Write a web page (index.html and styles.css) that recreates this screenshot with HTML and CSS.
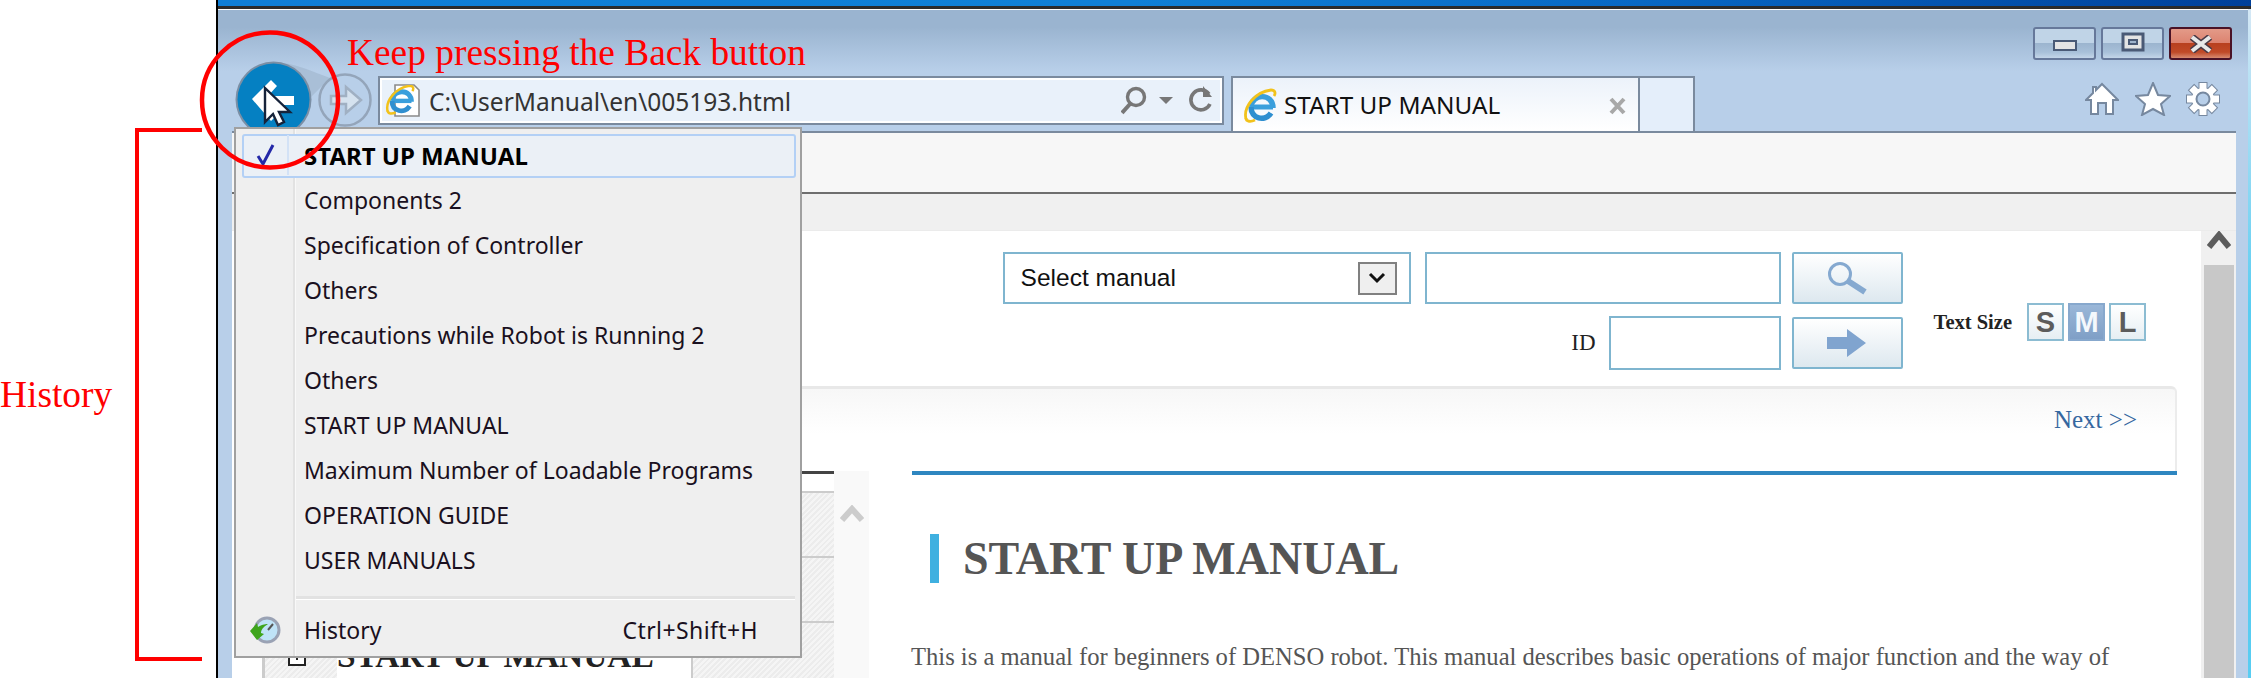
FILE: index.html
```html
<!DOCTYPE html>
<html lang="en">
<head>
    <meta charset="UTF-8">
    <meta name="viewport" content="width=device-width, initial-scale=1.0">
    <title>Keep pressing the Back button</title>
    <link rel="stylesheet" href="styles.css">
</head>
<body>
    <svg class="defs" width="0" height="0">
        <symbol id="ie" viewBox="0 0 34 34">
            <path d="M8 18H30" fill="none" stroke="#3a9fdc" stroke-width="5"/>
            <path d="M8 18c1-14 22-14 22 1" fill="none" stroke="#3a9fdc" stroke-width="5.500"/>
            <path d="M8 18c0 12 14 15 20 6" fill="none" stroke="#2f8fd0" stroke-width="5.500"/>
            <path d="M3 30C0 18 12 3 28 1c4 0 5 3 3 6" fill="none" stroke="#f2c21b" stroke-width="2.800"/>
            <path d="M3 29c0 4 5 4 9 2" fill="none" stroke="#f2c21b" stroke-width="2.800"/>
        </symbol>
        <g id="gear-shape">
            <rect x="-3.500" y="-16" width="7" height="32"/>
            <rect x="-3.500" y="-16" width="7" height="32" transform="rotate(45)"/>
            <rect x="-3.500" y="-16" width="7" height="32" transform="rotate(90)"/>
            <rect x="-3.500" y="-16" width="7" height="32" transform="rotate(135)"/>
            <circle r="11"/>
        </g>
    </svg>

    <div class="window">
        <div class="desktop"></div>
        <div class="frame">
            <div class="caption">
                <div class="win-btn">
                    <svg width="24" height="12"><rect x="1" y="1" width="22" height="9" fill="#e4e4e4" stroke="#4a5a76" stroke-width="2"/></svg>
                </div>
                <div class="win-btn win-btn-max">
                    <svg width="24" height="20"><rect x="2" y="2" width="20" height="16" fill="#e4e4e4" stroke="#4a5a76" stroke-width="3"/><rect x="8" y="8" width="8" height="4" fill="#9fb4cc" stroke="#4a5a76" stroke-width="2"/></svg>
                </div>
                <div class="win-btn win-btn-close">
                    <svg width="24" height="18"><path d="M3 2l18 14M21 2L3 16" stroke="#4a3a46" stroke-width="7"/><path d="M3 2l18 14M21 2L3 16" stroke="#e8e8e8" stroke-width="4"/></svg>
                </div>
            </div>

            <div class="toolbar">
                <svg class="nav-buttons" width="160" height="80" viewBox="0 0 160 80">
                    <path d="M55 2C75 2 95 12 112 18L90 40Z" fill="#9fb4cc" opacity="0.6"/>
                    <circle cx="55.500" cy="39.500" r="38" fill="#7b8fa5"/>
                    <circle cx="55.500" cy="39.500" r="36" fill="#0580c2"/>
                    <path d="M34 39l19-19 6 6-9 10h26v9H50l9 10-6 6z" fill="#fff"/>
                    <path d="M47 28V62l8-8 5 11 6-3-5-10h11z" fill="#fff" stroke="#16233a" stroke-width="2.400"/>
                    <circle cx="127" cy="40" r="25.500" fill="none" stroke="#94a5ba" stroke-width="2.500"/>
                    <path d="M113 36h15v-9l15 13-15 13v-9h-15z" fill="#d5e2ef" stroke="#a0b0c3" stroke-width="2.500"/>
                </svg>

                <div class="address">
                    <svg class="addr-icon" width="36" height="36" viewBox="0 0 36 36">
                        <path d="M10 2h19l5 5v26H10z" fill="#fff" stroke="#8a8a8a" stroke-width="1.600"/>
                        <use href="#ie" x="0" y="2" width="30" height="30"/>
                    </svg>
                    <span class="addr-text">C:\UserManual\en\005193.html</span>
                    <svg class="addr-tools" width="92" height="30" viewBox="0 0 92 30">
                        <circle cx="15" cy="11" r="8.500" fill="none" stroke="#777" stroke-width="3.400"/>
                        <path d="M9 18L1 27" stroke="#777" stroke-width="4"/>
                        <path d="M38 11h14l-7 7z" fill="#777"/>
                        <path d="M88 8a10 10 0 1 0 1 10" fill="none" stroke="#777" stroke-width="3.600"/>
                        <path d="M82 0v11h9z" fill="#777"/>
                    </svg>
                </div>

                <div class="tab">
                    <svg class="tab-icon" width="34" height="36"><use href="#ie" width="34" height="36"/></svg>
                    <span class="tab-title">START UP MANUAL</span>
                    <svg class="tab-close" width="17" height="18"><path d="M2 2l13 14M15 2L2 16" stroke="#a8a8a8" stroke-width="4"/></svg>
                </div>
                <div class="tab-new"></div>

                <div class="tools">
                    <svg width="34" height="34" viewBox="0 0 34 34"><path d="M17 2L33 18H28V32H21V21H13V32H6V18H1L8 11V5H11V8Z" fill="#fff" stroke="#76889f" stroke-width="2"/></svg>
                    <svg width="36" height="34" viewBox="0 0 36 34"><path d="M18 1l5 12 12 1-9 8 3 11-11-6-11 6 3-11-9-8 12-1z" fill="#fff" stroke="#76889f" stroke-width="2"/></svg>
                    <svg class="tools-gear" width="34" height="34" viewBox="-17 -17 34 34">
                        <use href="#gear-shape" fill="#76889f" stroke="#76889f" stroke-width="2"/>
                        <use href="#gear-shape" fill="#fff"/>
                        <circle r="6.500" fill="#b8cfe9" stroke="#76889f" stroke-width="2"/>
                    </svg>
                </div>
            </div>

            <div class="browser">
                <div class="favbar"></div>
                <div class="statusband"></div>
                <div class="viewport">
                    <div class="page">
                        <div class="page-head">
                            <div class="search">
                                <div class="search-row">
                                    <div class="select">
                                        <span>Select manual</span>
                                        <span class="select-btn">
                                            <svg width="20" height="14"><path d="M3 3l7 7 7-7" fill="none" stroke="#111" stroke-width="3"/></svg>
                                        </span>
                                    </div>
                                    <div class="input input-wide"></div>
                                    <div class="go-btn">
                                        <svg width="42" height="34" viewBox="0 0 42 34"><circle cx="14" cy="13" r="10.500" fill="none" stroke="#85a9d0" stroke-width="3"/><path d="M22 20l17 11" stroke="#85a9d0" stroke-width="6"/></svg>
                                    </div>
                                </div>
                                <div class="search-row search-row-id">
                                    <label class="id-label">ID</label>
                                    <div class="input input-id"></div>
                                    <div class="go-btn">
                                        <svg width="40" height="28" viewBox="0 0 40 28"><path d="M0 8h20V0l19 14-19 14v-8H0z" fill="#80a4cf"/></svg>
                                    </div>
                                </div>
                            </div>
                            <div class="text-size">
                                <span class="text-size-label">Text Size</span>
                                <span class="size-btn">S</span>
                                <span class="size-btn size-btn-on">M</span>
                                <span class="size-btn">L</span>
                            </div>
                        </div>

                        <div class="pager"><a class="next">Next &gt;&gt;</a></div>

                        <div class="columns">
                            <div class="sidebar">
                                <div class="tree">
                                    <div class="tree-row"></div>
                                    <div class="tree-row"></div>
                                    <div class="tree-row tree-row-open">
                                        <span class="tree-toggle"></span>
                                        <span class="tree-label">START UP MANUAL</span>
                                    </div>
                                </div>
                                <div class="tree-scroll">
                                    <svg width="24" height="18"><path d="M2 15L12 4l10 11" fill="none" stroke="#ccc" stroke-width="6"/></svg>
                                </div>
                            </div>
                            <div class="article">
                                <h1>START UP MANUAL</h1>
                                <p>This is a manual for beginners of DENSO robot. This manual describes basic operations of major function and the way of</p>
                            </div>
                        </div>
                    </div>
                    <div class="scrollbar">
                        <svg width="24" height="18"><path d="M2 16L12 4l10 12" fill="none" stroke="#5c5c5c" stroke-width="6"/></svg>
                        <div class="scroll-thumb"></div>
                    </div>
                </div>
            </div>
        </div>
    </div>

    <!-- History menu, open over the page -->
    <div class="menu">
        <div class="menu-item menu-item-current">
            <span class="menu-check">
                <svg width="20" height="24" viewBox="0 0 20 24"><path d="M2 13l5 8L17 2" fill="none" stroke="#2328a8" stroke-width="3"/></svg>
            </span>
            <span>START UP MANUAL</span>
        </div>
        <div class="menu-item">Components 2</div>
        <div class="menu-item">Specification of Controller</div>
        <div class="menu-item">Others</div>
        <div class="menu-item">Precautions while Robot is Running 2</div>
        <div class="menu-item">Others</div>
        <div class="menu-item">START UP MANUAL</div>
        <div class="menu-item">Maximum Number of Loadable Programs</div>
        <div class="menu-item">OPERATION GUIDE</div>
        <div class="menu-item">USER MANUALS</div>
        <div class="menu-sep"></div>
        <div class="menu-item menu-item-history">
            <svg class="history-icon" width="32" height="32" viewBox="0 0 32 32">
                <circle cx="18" cy="15" r="12" fill="#bfe3f7" stroke="#9aa2b4" stroke-width="3"/>
                <path d="M19 15l5-6" stroke="#555" stroke-width="2"/>
                <path d="M1 16l7-8 1 4c5-3 8-3 10-3-5 3-7 6-7 9l3 1-7 6z" fill="#3fa51c"/>
            </svg>
            <span>History</span>
            <span class="shortcut">Ctrl+Shift+H</span>
        </div>
    </div>

    <!-- Red notes drawn on the screenshot -->
    <svg class="note-circle" width="146" height="146" viewBox="0 0 146 146">
        <ellipse cx="73" cy="73" rx="68" ry="67.500" fill="none" stroke="#f00" stroke-width="4.500"/>
    </svg>
    <div class="note-back">Keep pressing the Back button</div>
    <div class="note-bracket"></div>
    <div class="note-history">History</div>
</body>
</html>
```

FILE: styles.css
```css
* {
    box-sizing: border-box;
}

body {
    margin: 0;
    width: 2251px;
    height: 678px;
    overflow: hidden;
    position: relative;
    background-color: #fff;
    font-family: "Liberation Serif", serif;
}

.defs {
    position: absolute;
}

.window {
    margin-left: 216px;
    height: 678px;
    border-left: 2px solid #000;
    display: flex;
    flex-direction: column;
    overflow: hidden;
}

.desktop {
    height: 6px;
    flex: none;
    background: linear-gradient(90deg, #0f7ed6, #1080d6 45%, #0868c4 70%, #00409a);
}

.frame {
    flex: 1;
    min-height: 0;
    border-top: 3px solid #2b2b2b;
    display: flex;
    flex-direction: column;
    background:
        linear-gradient(#d5e8f5, #58cdf2 45%) right / 3px 100% no-repeat,
        linear-gradient(#fff 1px, #9ab4d0 1px, #9ab4d0 18px, #b8cfe9 62px);
}

/* title bar */
.caption {
    height: 67px;
    flex: none;
    padding: 18px 19px 0 0;
    display: flex;
    justify-content: flex-end;
    align-items: flex-start;
    gap: 5px;
}

.win-btn {
    width: 63px;
    height: 33px;
    border: 2px solid #66789a;
    border-radius: 3px;
    display: flex;
    align-items: flex-end;
    justify-content: center;
    padding-bottom: 6px;
    background: linear-gradient(#c0d4e7 50%, #9cb5cf 50%, #a8c0d9 80%, #c3d5e8);
}

.win-btn-max {
    padding-bottom: 6px;
}

.win-btn-close {
    border-color: #4a1226;
    padding-bottom: 5px;
    background: linear-gradient(#e39a88, #dc8370 48%, #b8401f 50%, #c04a28 80%, #d88a70);
}

/* nav buttons, address, tabs */
.toolbar {
    height: 55px;
    flex: none;
    display: flex;
    align-items: flex-start;
}

.nav-buttons {
    flex: none;
    margin-top: -16px;
}

.address {
    width: 846px;
    height: 49px;
    flex: none;
    border: 2px solid #7a8a9e;
    box-shadow: inset 0 0 0 2px #fff;
    background-color: #e9f1fa;
    display: flex;
    align-items: center;
    padding: 1px 9px 0 5px;
    font-family: "Noto Sans", sans-serif;
    font-size: 24.500px;
    color: #333;
}

.addr-icon {
    flex: none;
}

.addr-text {
    margin-left: 8px;
    flex: 1;
}

.tab {
    width: 409px;
    height: 55px;
    flex: none;
    margin-left: 7px;
    border: 2px solid #7a8a9e;
    border-bottom: none;
    background: linear-gradient(#ecf2fa, #fff);
    display: flex;
    align-items: center;
    padding: 0 12px 0 10px;
    font-family: "Noto Sans", sans-serif;
    font-size: 24.300px;
    color: #111;
}

.tab-icon {
    margin-top: 2px;
}

.tab-title {
    margin-left: 7px;
    flex: 1;
}

.tab-close {
    margin-top: 2px;
}

.tab-new {
    width: 55px;
    height: 55px;
    flex: none;
    border: 2px solid #7a8a9e;
    border-left: none;
    border-bottom: none;
    background-color: #e4eefa;
}

.tools {
    margin-left: auto;
    padding: 6px 31px 0 0;
    display: flex;
    gap: 16px;
}

.tools-gear {
    margin-left: -1px;
}

/* browser body */
.browser {
    flex: 1;
    min-height: 0;
    margin: 0 15px 0 14px;
    display: flex;
    flex-direction: column;
}

.favbar {
    height: 63px;
    flex: none;
    border-top: 2px solid #7a8a9e;
    border-bottom: 2px solid #6e6e6e;
    background-color: #f7f7f7;
}

.statusband {
    height: 37px;
    flex: none;
    border-bottom: 1px solid #ebebeb;
    background-color: #f0f0f0;
}

.viewport {
    flex: 1;
    min-height: 0;
    display: flex;
}

.page {
    flex: 1;
    min-width: 0;
    background-color: #fff;
}

.scrollbar {
    width: 35px;
    flex: none;
    background-color: #f0f0f0;
    display: flex;
    flex-direction: column;
    align-items: center;
}

.scroll-thumb {
    width: 30px;
    height: 420px;
    margin-top: 16px;
    background-color: #c8c8c8;
}

/* search block */
.page-head {
    height: 155px;
    padding: 21px 55px 0 0;
    display: flex;
    justify-content: flex-end;
}

.search {
    display: flex;
    flex-direction: column;
    gap: 12px;
}

.search-row {
    height: 52px;
    display: flex;
    justify-content: flex-end;
    align-items: center;
}

.search-row-id {
    height: 54px;
}

.select {
    width: 408px;
    height: 52px;
    border: 2px solid #7fb5cf;
    display: flex;
    align-items: center;
    justify-content: space-between;
    padding: 0 12px 0 16px;
    font-family: "Liberation Sans", sans-serif;
    font-size: 24.500px;
    color: #111;
}

.select-btn {
    width: 39px;
    height: 33px;
    border: 2px solid #808080;
    background-color: #efefef;
    display: flex;
    align-items: center;
    justify-content: center;
}

.input {
    height: 52px;
    border: 2px solid #7fb5cf;
}

.input-wide {
    width: 356px;
    margin-left: 14px;
}

.input-id {
    width: 172px;
    height: 54px;
    margin-left: 13px;
}

.id-label {
    font-size: 23px;
    color: #222;
}

.go-btn {
    width: 111px;
    height: 52px;
    margin-left: 11px;
    border: 2px solid #7fb5cf;
    border-radius: 2px;
    background: linear-gradient(#fff, #dde8ef);
    display: flex;
    align-items: center;
    justify-content: center;
}

.text-size {
    margin: 51px 0 0 31px;
    height: 38px;
    display: flex;
    align-items: center;
}

.text-size-label {
    font-size: 20.500px;
    font-weight: bold;
    color: #222;
    margin-right: 15px;
}

.size-btn {
    width: 37px;
    height: 38px;
    margin-right: 4px;
    border: 2px solid #8cbcd2;
    background: linear-gradient(#fff, #e6eef3);
    font-family: "Liberation Sans", sans-serif;
    font-size: 29px;
    font-weight: bold;
    line-height: 34px;
    text-align: center;
    color: #5c5c5c;
}

.size-btn:last-child {
    margin-right: 0;
}

.size-btn-on {
    border-color: #87a8cd;
    background: linear-gradient(#9ab7d8, #7f9fc6);
    color: #f4f8fc;
}

/* pager */
.pager {
    height: 85px;
    margin: 0 24px;
    padding: 17px 38px 0 0;
    border-top: 3px solid #e8e8e8;
    border-right: 2px solid #ececec;
    border-radius: 0 6px 0 0;
    background: linear-gradient(#f7f7f7, #fff 55%);
    text-align: right;
}

.next {
    font-size: 25px;
    color: #35679f;
}

/* columns */
.columns {
    height: 207px;
    margin: 0 24px;
    display: flex;
    overflow: hidden;
}

.sidebar {
    width: 613px;
    flex: none;
    display: flex;
}

.tree {
    flex: 1;
    border-top: 3px solid #444;
    padding-top: 17px;
    border-left: 3px solid #ccc;
    margin-left: 6px;
}

.tree-row {
    height: 65px;
    border-top: 2px solid #ccc;
    display: flex;
    background: repeating-linear-gradient(135deg, #f5f5f5, #f5f5f5 2px, #ececec 2px, #ececec 4px);
}

.tree-row-open {
    position: relative;
    padding-left: 72px;
}

.tree-toggle {
    position: absolute;
    left: 23px;
    top: 19px;
    width: 18px;
    height: 24px;
    border: 2px solid #222;
    background-color: #fff;
}

.tree-toggle::after {
    content: "";
    position: absolute;
    left: 6px;
    top: 12px;
    width: 2px;
    height: 4px;
    background-color: #222;
}

.tree-label {
    width: 356px;
    flex: none;
    background-color: #fff;
    border-right: 2px solid #ccc;
    font-size: 33.400px;
    font-weight: bold;
    line-height: 44px;
    padding-top: 11px;
    color: #222;
}

.tree-scroll {
    width: 35px;
    flex: none;
    padding: 34px 0 0 6px;
    background-color: #f9f9f9;
}

.article {
    flex: 1;
    margin-left: 43px;
    border-top: 4px solid #2e86c0;
    color: #555;
}

.article h1 {
    margin: 59px 0 0 18px;
    height: 49px;
    padding-left: 24px;
    border-left: 9px solid #3fb0e0;
    font-size: 46px;
    line-height: 49px;
}

.article p {
    margin: 58px 0 0 -1px;
    font-size: 24.600px;
    line-height: 32px;
    white-space: nowrap;
}

/* history menu */
.menu {
    position: absolute;
    left: 234px;
    top: 127px;
    width: 568px;
    height: 531px;
    padding-top: 5px;
    border: 2px solid #a0a0a0;
    background: linear-gradient(90deg, #efefef 57px, #e2e2e2 57px, #e2e2e2 59px, #f8f8f8 59px, #f8f8f8 60px, #efefef 60px);
    font-family: "Noto Sans", sans-serif;
    font-size: 23px;
    color: #1a1020;
}

.menu-item {
    height: 45px;
    padding: 0 0 3px 68px;
    display: flex;
    align-items: center;
}

.menu-item-current {
    height: 44px;
    margin: 0 4px 1px 6px;
    padding: 0 0 2px;
    border: 2px solid #b3d0f5;
    border-radius: 3px;
    background-color: #ebf0f6;
    font-size: 24px;
    font-weight: bold;
    color: #000;
}

.menu-check {
    width: 45px;
    height: 40px;
    flex: none;
    margin-right: 15px;
    border-right: 2px solid #d3e2f6;
    display: flex;
    align-items: center;
    justify-content: center;
}

.menu-sep {
    height: 3px;
    margin: 12px 5px 0 60px;
    background-color: #e2e2e2;
    border-bottom: 1px solid #fff;
    box-sizing: content-box;
}

.menu-item-history {
    margin-top: 9px;
    position: relative;
}

.history-icon {
    position: absolute;
    left: 13px;
    top: 6px;
}

.shortcut {
    margin-left: auto;
    margin-right: 42px;
    letter-spacing: 0.400px;
}

/* red notes */
.note-circle {
    position: absolute;
    left: 197px;
    top: 27px;
}

.note-back {
    position: absolute;
    left: 347px;
    top: 31px;
    font-size: 37.400px;
    line-height: 44px;
    color: #f00;
    white-space: nowrap;
}

.note-bracket {
    position: absolute;
    left: 135px;
    top: 128px;
    width: 67px;
    height: 533px;
    border: 4px solid #f00;
    border-right: none;
}

.note-history {
    position: absolute;
    left: 0;
    top: 373px;
    font-size: 37.400px;
    line-height: 44px;
    color: #f00;
}
```
